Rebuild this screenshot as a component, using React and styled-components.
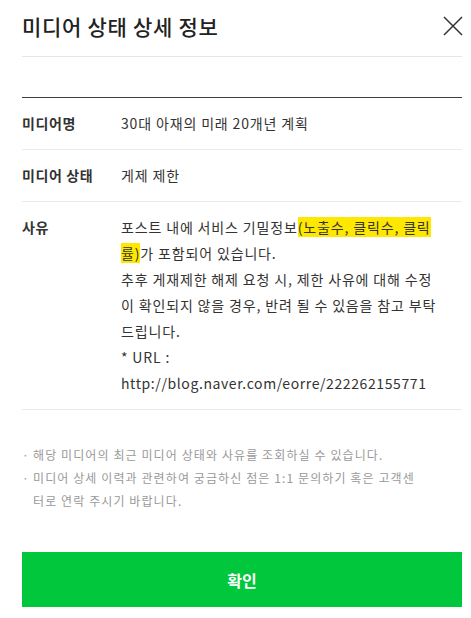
import React from 'react';
import styled, { createGlobalStyle } from 'styled-components';

const GlobalStyle = createGlobalStyle`
  * {
    box-sizing: border-box;
  }
  body {
    margin: 0;
    background: #fff;
    font-family: 'Noto Sans CJK KR', 'Noto Sans', sans-serif;
    color: #333;
  }
`;

const rows = [
  { label: '미디어명', value: '30대 아재의 미래 20개년 계획' },
  { label: '미디어 상태', value: '게제 제한' },
];

const notes = [
  '해당 미디어의 최근 미디어 상태와 사유를 조회하실 수 있습니다.',
  '미디어 상세 이력과 관련하여 궁금하신 점은 1:1 문의하기 혹은 고객센터로 연락 주시기 바랍니다.',
];

function CloseIcon() {
  return (
    <svg width="20" height="20" viewBox="0 0 20 20" fill="none">
      <path d="M1 1L19 19M19 1L1 19" stroke="#333" strokeWidth="1.5" />
    </svg>
  );
}

function App() {
  return (
    <StyledModal>
      <GlobalStyle />
      <StyledHeader>
        <StyledTitle>미디어 상태 상세 정보</StyledTitle>
        <StyledClose aria-label="닫기">
          <CloseIcon />
        </StyledClose>
      </StyledHeader>

      <StyledTable>
        {rows.map((row) => (
          <StyledRow key={row.label}>
            <StyledLabel>{row.label}</StyledLabel>
            <StyledValue>{row.value}</StyledValue>
          </StyledRow>
        ))}
        <StyledRow>
          <StyledLabel>사유</StyledLabel>
          <StyledValue $wrap>
            포스트 내에 서비스 기밀정보<StyledMark>(노출수, 클릭수, 클릭률)</StyledMark>가 포함되어 있습니다.
            <br />
            추후 게재제한 해제 요청 시, 제한 사유에 대해 수정이 확인되지 않을 경우, 반려 될 수 있음을 참고 부탁드립니다.
            <br />* URL :
            <br />
            <StyledUrl>http://blog.naver.com/eorre/222262155771</StyledUrl>
          </StyledValue>
        </StyledRow>
      </StyledTable>

      <StyledNotes>
        {notes.map((note) => (
          <StyledNote key={note}>{note}</StyledNote>
        ))}
      </StyledNotes>

      <StyledButton type="button">확인</StyledButton>
    </StyledModal>
  );
}

export default App;

const StyledModal = styled.div`
  width: 440px;
  margin-left: 22px;
`;

const StyledHeader = styled.div`
  display: flex;
  align-items: center;
  justify-content: space-between;
  height: 57px;
  padding-bottom: 4px;
  border-bottom: 1px solid #e5e5e5;
`;

const StyledTitle = styled.h2`
  margin: 0;
  font-size: 21px;
  font-weight: 500;
  color: #222;
  letter-spacing: 0.7px;
`;

const StyledClose = styled.button`
  display: flex;
  padding: 0;
  margin-right: -1px;
  border: 0;
  background: none;
  cursor: pointer;
`;

const StyledTable = styled.div`
  margin-top: 40px;
  border-top: 1px solid #3c3f44;
`;

const StyledRow = styled.div`
  display: flex;
  padding: 12px 0 13px;
  border-bottom: 1px solid #ebebeb;
  font-size: 14px;
  line-height: 26px;
`;

const StyledLabel = styled.div`
  flex: 0 0 99px;
  font-weight: 700;
  color: #333;
  letter-spacing: 0.6px;
`;

const StyledValue = styled.div`
  width: ${(props) => (props.$wrap ? '320px' : 'auto')};
  color: #333;
  letter-spacing: 0.85px;
`;

const StyledMark = styled.span`
  background: #ffe800;
`;

const StyledUrl = styled.span`
  letter-spacing: 0.6px;
`;

const StyledNotes = styled.ul`
  margin: 33px 0 0;
  padding: 0;
  list-style: none;
  font-size: 12px;
  line-height: 23px;
  color: #999;
  letter-spacing: 1.1px;
`;

const StyledNote = styled.li`
  position: relative;
  padding-left: 11px;
  padding-right: 40px;

  &::before {
    content: '·';
    position: absolute;
    left: 0;
    top: 0;
  }
`;

const StyledButton = styled.button`
  display: block;
  width: 100%;
  height: 55px;
  margin-top: 40px;
  border: 0;
  background: #00c73c;
  color: #fff;
  font-family: inherit;
  font-size: 16px;
  font-weight: 700;
  cursor: pointer;
`;
